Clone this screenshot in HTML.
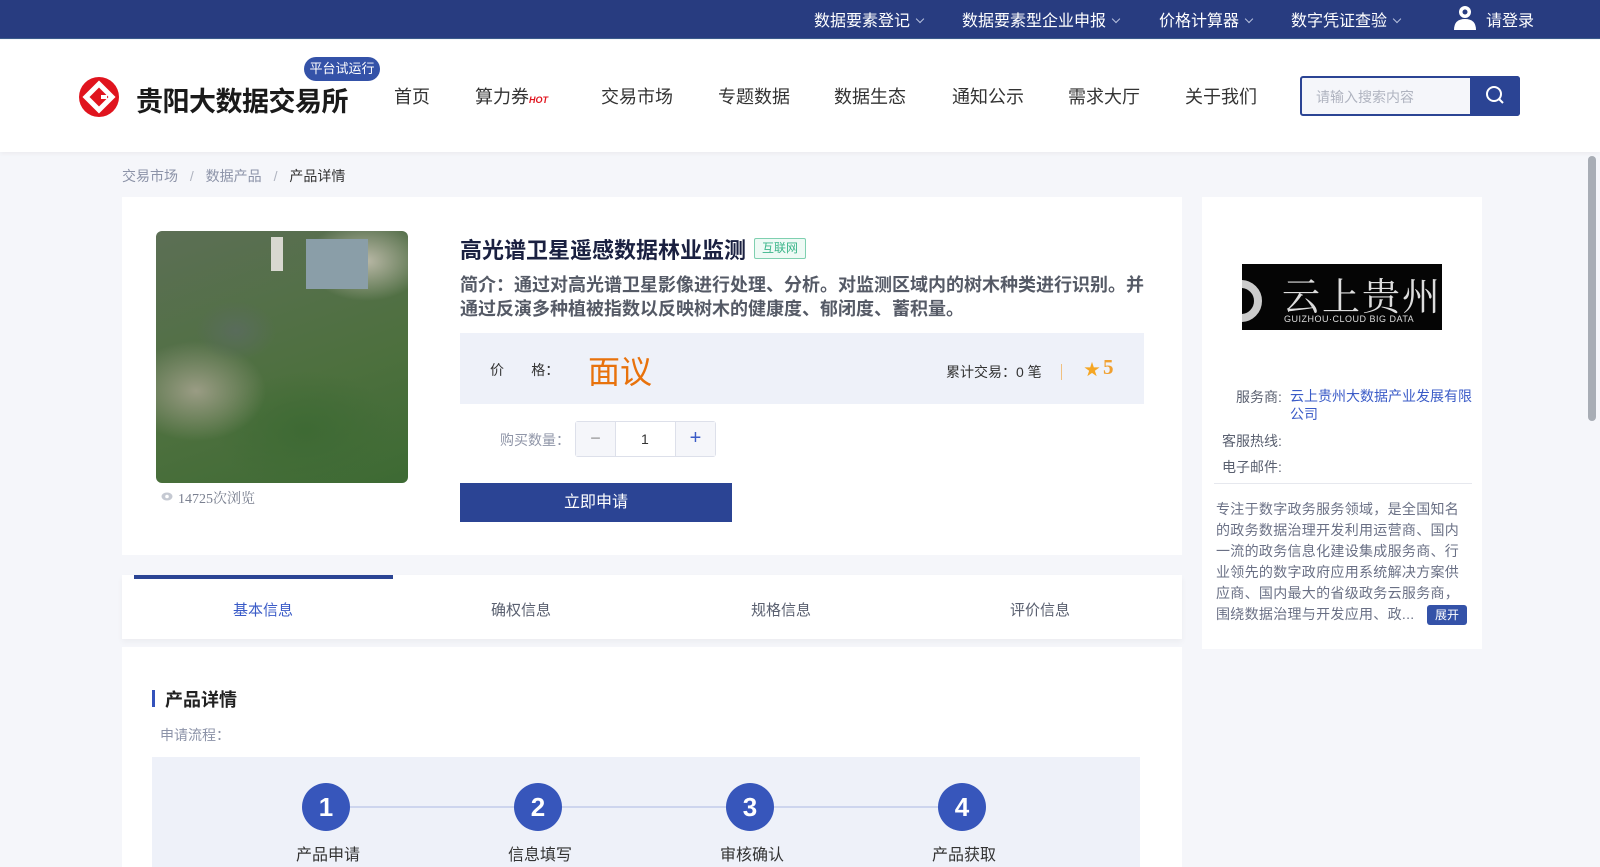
<!DOCTYPE html>
<html><head><meta charset="utf-8"><style>
*{margin:0;padding:0;box-sizing:border-box}
body{width:1600px;height:861px;overflow:hidden;background:#f5f6fa;font-family:"Liberation Sans","Noto Sans CJK SC",sans-serif;position:relative;color:#333}
.a{position:absolute;white-space:nowrap}
.top{position:absolute;left:0;top:0;width:1600px;height:39px;background:#283c80;border-bottom:1px solid #3a5a8a}
.top .a{color:#fff;font-size:16px;top:7px}
.chev{display:inline-block;width:6px;height:6px;border-right:1px solid #b8c2de;border-bottom:1px solid #b8c2de;transform:rotate(45deg);margin-left:7px;position:relative;top:-4px}
.hdr{position:absolute;left:0;top:40px;width:1600px;height:112px;background:#fff;box-shadow:0 2px 4px rgba(0,0,0,.04)}
.nav{font-size:18px;color:#333;top:83px}
.card{position:absolute;background:#fff}
.circ{position:absolute;width:48px;height:48px;border-radius:50%;background:#3756bb;color:#fff;font-size:26px;font-weight:bold;text-align:center;line-height:48px}
.lab{font-size:16px;color:#333;top:841px}
</style></head><body>
<div class="top">
<div class="a" style="left:814px">数据要素登记<span class="chev"></span></div>
<div class="a" style="left:962px">数据要素型企业申报<span class="chev"></span></div>
<div class="a" style="left:1159px">价格计算器<span class="chev"></span></div>
<div class="a" style="left:1291px">数字凭证查验<span class="chev"></span></div>
<svg class="a" style="left:1453px;top:5px" width="24" height="26" viewBox="0 0 24 26"><circle cx="12" cy="7" r="6" fill="#fff"/><circle cx="12" cy="7" r="2.5" fill="#283c80"/><path d="M1 25 Q1 14 12 14 Q23 14 23 25Z" fill="#fff"/></svg>
<div class="a" style="left:1486px">请登录</div>
</div>
<div class="hdr"></div>
<svg class="a" style="left:79px;top:77px" width="40" height="40" viewBox="0 0 40 40"><circle cx="20" cy="20" r="20" fill="#e0141e"/><path d="M20 7 L33 20 L20 33 L7 20 Z" fill="none" stroke="#fff" stroke-width="5" stroke-linejoin="miter"/><path d="M20 15 L25 20 L20 25" fill="none" stroke="#e0141e" stroke-width="4"/><path d="M22 20 H28" stroke="#fff" stroke-width="4"/></svg>
<div class="a" style="left:136px;top:80px;font-size:27px;font-weight:bold;color:#1a1a1a;letter-spacing:-0.5px">贵阳大数据交易所</div>
<div class="a" style="left:304px;top:57px;width:76px;height:24px;border-radius:12px;background:#3452a8;color:#fff;font-size:13px;text-align:center;line-height:24px">平台试运行</div>
<div class="a nav" style="left:394px">首页</div>
<div class="a nav" style="left:475px">算力券<span style="color:#e0141e;font-size:9px;font-weight:bold;font-style:italic">HOT</span></div>
<div class="a nav" style="left:601px">交易市场</div>
<div class="a nav" style="left:718px">专题数据</div>
<div class="a nav" style="left:834px">数据生态</div>
<div class="a nav" style="left:952px">通知公示</div>
<div class="a nav" style="left:1068px">需求大厅</div>
<div class="a nav" style="left:1185px">关于我们</div>
<div class="a" style="left:1300px;top:76px;width:220px;height:40px;border:2px solid #2b4494;border-radius:3px;background:#f5f6fa"></div>
<div class="a" style="left:1316px;top:87px;font-size:14px;color:#b0b4c0">请输入搜索内容</div>
<div class="a" style="left:1470px;top:76px;width:50px;height:40px;background:#2b4494;border-radius:0 3px 3px 0"></div>
<svg class="a" style="left:1485px;top:85px" width="20" height="20" viewBox="0 0 20 20"><circle cx="9" cy="9" r="7" fill="none" stroke="#fff" stroke-width="2"/><path d="M14 14 L18 18" stroke="#fff" stroke-width="2"/></svg>
<div class="a" style="left:1588px;top:156px;width:8px;height:265px;border-radius:4px;background:#a8adb5"></div>

<div class="a" style="left:122px;top:166px;font-size:14px;color:#8c93a8">交易市场 <span style="margin:0 8px;color:#b0b4c0">/</span> 数据产品 <span style="margin:0 8px;color:#b0b4c0">/</span> <span style="color:#333">产品详情</span></div>

<div class="card" style="left:122px;top:197px;width:1060px;height:358px"></div>
<div class="a" style="left:156px;top:231px;width:252px;height:252px;border-radius:6px;overflow:hidden;background:
radial-gradient(ellipse 60px 40px at 210px 30px,#b9b8a6 0,transparent 100%),
radial-gradient(ellipse 40px 30px at 80px 100px,#596c5b 0,transparent 100%),
radial-gradient(ellipse 70px 50px at 40px 160px,#9a9c84 0,transparent 100%),
radial-gradient(ellipse 90px 60px at 150px 200px,#3e6a34 0,transparent 100%),
linear-gradient(160deg,#5c6f55,#4d703e 60%,#3d6a33)">
<div style="position:absolute;left:150px;top:8px;width:62px;height:50px;background:#8a9ea8"></div>
<div style="position:absolute;left:115px;top:6px;width:12px;height:34px;background:#d8d8d0"></div>
</div>
<svg class="a" style="left:161px;top:492px" width="12" height="9" viewBox="0 0 12 9"><ellipse cx="6" cy="4.5" rx="5.5" ry="4" fill="#c5c9d2"/><circle cx="6" cy="4.5" r="1.8" fill="#fff"/></svg>
<div class="a" style="left:178px;top:488px;font-size:14px;color:#7a8090;font-family:'Liberation Serif','Noto Serif CJK SC',serif">14725次浏览</div>

<div class="a" style="left:460px;top:233px;font-size:22px;font-weight:bold;color:#1a2040">高光谱卫星遥感数据林业监测</div>
<div class="a" style="left:754px;top:238px;width:52px;height:21px;border:1px solid #7fd0b0;background:#eefaf5;border-radius:2px;color:#3bb58a;font-size:12px;text-align:center;line-height:19px">互联网</div>
<div class="a" style="left:460px;top:273px;width:690px;white-space:normal;font-size:18px;font-weight:bold;color:#555a66;line-height:24px">简介：通过对高光谱卫星影像进行处理、分析。对监测区域内的树木种类进行识别。并通过反演多种植被指数以反映树木的健康度、郁闭度、蓄积量。</div>
<div class="a" style="left:460px;top:333px;width:684px;height:71px;background:#eef1f9"></div>
<div class="a" style="left:490px;top:360px;font-size:14px;color:#333">价&nbsp;&nbsp;&nbsp;&nbsp;&nbsp;&nbsp;&nbsp;格：</div>
<div class="a" style="left:588px;top:347px;font-size:32px;color:#e8720c">面议</div>
<div class="a" style="left:946px;top:362px;font-size:14px;color:#333">累计交易：0 笔</div>
<div class="a" style="left:1061px;top:364px;width:1px;height:16px;background:#f0c080"></div>
<div class="a" style="left:1084px;top:356px;font-size:16px;color:#f5a623">★</div>
<div class="a" style="left:1103px;top:355px;font-size:21px;font-weight:bold;color:#f0a030;font-family:'Liberation Serif',serif">5</div>
<div class="a" style="left:500px;top:430px;font-size:14px;color:#9096a8">购买数量：</div>
<div class="a" style="left:575px;top:421px;width:141px;height:36px;border:1px solid #dde0ea;border-radius:3px;background:#fff"></div>
<div class="a" style="left:576px;top:422px;width:40px;height:34px;background:#f5f6fa;border-right:1px solid #dde0ea;text-align:center;line-height:32px;color:#999;font-size:18px">−</div>
<div class="a" style="left:675px;top:422px;width:40px;height:34px;background:#f5f6fa;border-left:1px solid #dde0ea;text-align:center;line-height:32px;color:#3a5bc7;font-size:20px">+</div>
<div class="a" style="left:641px;top:431px;font-size:14px;color:#333">1</div>
<div class="a" style="left:460px;top:483px;width:272px;height:39px;background:#2b4494;color:#fff;font-size:16px;text-align:center;line-height:39px">立即申请</div>

<div class="card" style="left:122px;top:575px;width:1060px;height:64px;box-shadow:0 3px 6px rgba(0,0,0,.04)"></div>
<div class="a" style="left:134px;top:575px;width:259px;height:4px;background:#2b4494"></div>
<div class="a" style="left:233px;top:599px;font-size:15px;color:#3a5bc7">基本信息</div>
<div class="a" style="left:491px;top:599px;font-size:15px;color:#5a6070">确权信息</div>
<div class="a" style="left:751px;top:599px;font-size:15px;color:#5a6070">规格信息</div>
<div class="a" style="left:1010px;top:599px;font-size:15px;color:#5a6070">评价信息</div>

<div class="card" style="left:122px;top:647px;width:1060px;height:220px"></div>
<div class="a" style="left:152px;top:690px;width:3px;height:17px;background:#3452bb"></div>
<div class="a" style="left:165px;top:686px;font-size:18px;font-weight:bold;color:#222">产品详情</div>
<div class="a" style="left:160px;top:725px;font-size:14px;color:#8c93a8">申请流程：</div>
<div class="a" style="left:152px;top:757px;width:988px;height:110px;background:#eef1f9"></div>
<div class="a" style="left:350px;top:806px;width:612px;height:2px;background:#cdd5ee"></div>
<div class="circ" style="left:302px;top:783px">1</div>
<div class="circ" style="left:514px;top:783px">2</div>
<div class="circ" style="left:726px;top:783px">3</div>
<div class="circ" style="left:938px;top:783px">4</div>
<div class="a lab" style="left:296px">产品申请</div>
<div class="a lab" style="left:508px">信息填写</div>
<div class="a lab" style="left:720px">审核确认</div>
<div class="a lab" style="left:932px">产品获取</div>

<div class="card" style="left:1202px;top:197px;width:280px;height:452px"></div>
<div class="a" style="left:1242px;top:264px;width:200px;height:66px;background:#050505;overflow:hidden">
<div style="position:absolute;left:-22px;top:16px;width:42px;height:42px;border-radius:50%;border:8px solid #ccc"></div>
<div style="position:absolute;left:40px;top:2px;font-size:38px;color:#ddd;font-family:'Noto Serif CJK SC',serif;letter-spacing:2px">云上贵州</div>
<div style="position:absolute;left:42px;top:50px;font-size:9px;color:#ddd;letter-spacing:.5px">GUIZHOU·CLOUD BIG DATA</div>
</div>
<div class="a" style="left:1236px;top:387px;font-size:14px;color:#5a6070">服务商:</div>
<div class="a" style="left:1290px;top:387px;width:190px;white-space:normal;font-size:14px;color:#3a5bc7;line-height:18px">云上贵州大数据产业发展有限公司</div>
<div class="a" style="left:1222px;top:431px;font-size:14px;color:#5a6070">客服热线:</div>
<div class="a" style="left:1222px;top:457px;font-size:14px;color:#5a6070">电子邮件:</div>
<div class="a" style="left:1214px;top:483px;width:258px;height:1px;background:#e6e8ee"></div>
<div class="a" style="left:1216px;top:499px;width:252px;white-space:normal;font-size:14px;color:#6a7085;line-height:21px;letter-spacing:.3px">专注于数字政务服务领域，是全国知名的政务数据治理开发利用运营商、国内一流的政务信息化建设集成服务商、行业领先的数字政府应用系统解决方案供应商、国内最大的省级政务云服务商，围绕数据治理与开发应用、政...</div>
<div class="a" style="left:1427px;top:605px;width:40px;height:20px;background:#3452a8;border-radius:3px;color:#fff;font-size:12px;text-align:center;line-height:20px">展开</div>
</body></html>
